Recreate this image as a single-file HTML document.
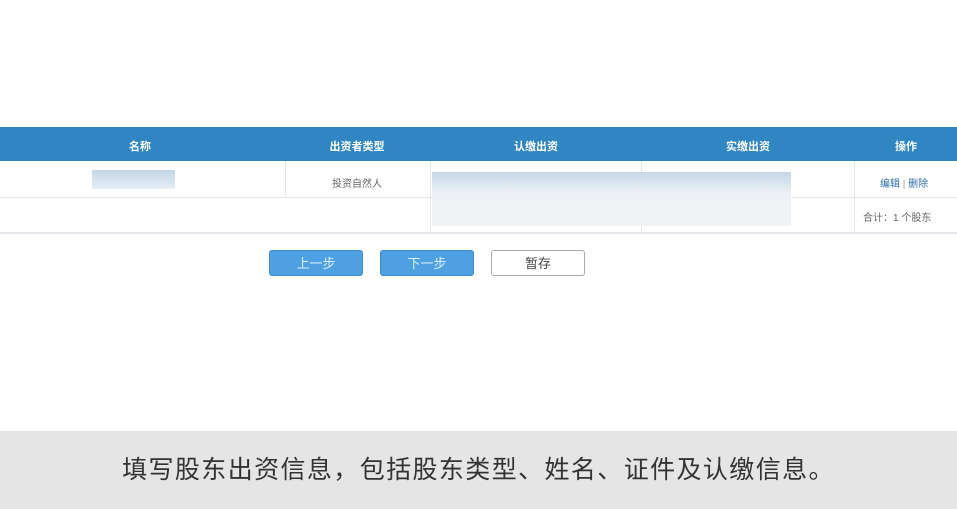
<!DOCTYPE html><html><head><meta charset="utf-8"><style>
body{margin:0;width:957px;height:509px;background:#fff;position:relative;overflow:hidden;font-family:"Liberation Sans","Noto Sans CJK SC",sans-serif}
.a{position:absolute}
.hd{left:0;top:127px;width:957px;height:34px;background:#2f86c3;color:#fff;font-size:11px;font-weight:bold}
.hd span{position:absolute;top:11px;transform:translateX(-50%)}
.ln{background:#e4e8ec}
.btn{top:250px;width:94px;height:26px;border-radius:3px;font-size:13px;text-align:center;line-height:26px;box-sizing:border-box}
.bl{background:#4ea0e2;color:#dbeeff;border:1px solid #3f8ccc}
</style></head><body>
<div class="a hd"><span style="left:140px">名称</span><span style="left:357px">出资者类型</span><span style="left:536px">认缴出资</span><span style="left:748px">实缴出资</span><span style="left:906px">操作</span></div>
<div class="a ln" style="left:0;top:197px;width:957px;height:1px"></div>
<div class="a ln" style="left:0;top:232px;width:957px;height:2px"></div>
<div class="a ln" style="left:285px;top:161px;width:1px;height:36px"></div>
<div class="a ln" style="left:430px;top:161px;width:1px;height:71px"></div>
<div class="a ln" style="left:641px;top:161px;width:1px;height:71px"></div>
<div class="a ln" style="left:854px;top:161px;width:1px;height:71px"></div>
<div class="a" style="left:92px;top:170px;width:83px;height:19px;background:linear-gradient(#c3d6e6,#e6eef5)"></div>
<div class="a" style="left:432px;top:172px;width:359px;height:54px;background:linear-gradient(#c5d7e7,#edf1f5 40%,#f1f3f5)"></div>
<div class="a" style="left:332px;top:175px;font-size:10px;color:#666">投资自然人</div>
<div class="a" style="left:880px;top:175px;font-size:10px;color:#2f6fa8">编辑 <span style="color:#999">|</span> 删除</div>
<div class="a" style="left:863px;top:209px;font-size:10px;color:#666">合计：1 个股东</div>
<div class="a btn bl" style="left:269px">上一步</div>
<div class="a btn bl" style="left:380px">下一步</div>
<div class="a btn" style="left:491px;border:1px solid #aaa;color:#444;background:#fff">暂存</div>
<div class="a" style="left:0;top:431px;width:957px;height:78px;background:#e5e5e5;text-align:center;line-height:78px;font-size:25px;color:#333;letter-spacing:1.4px">填写股东出资信息，包括股东类型、姓名、证件及认缴信息。</div>
</body></html>
